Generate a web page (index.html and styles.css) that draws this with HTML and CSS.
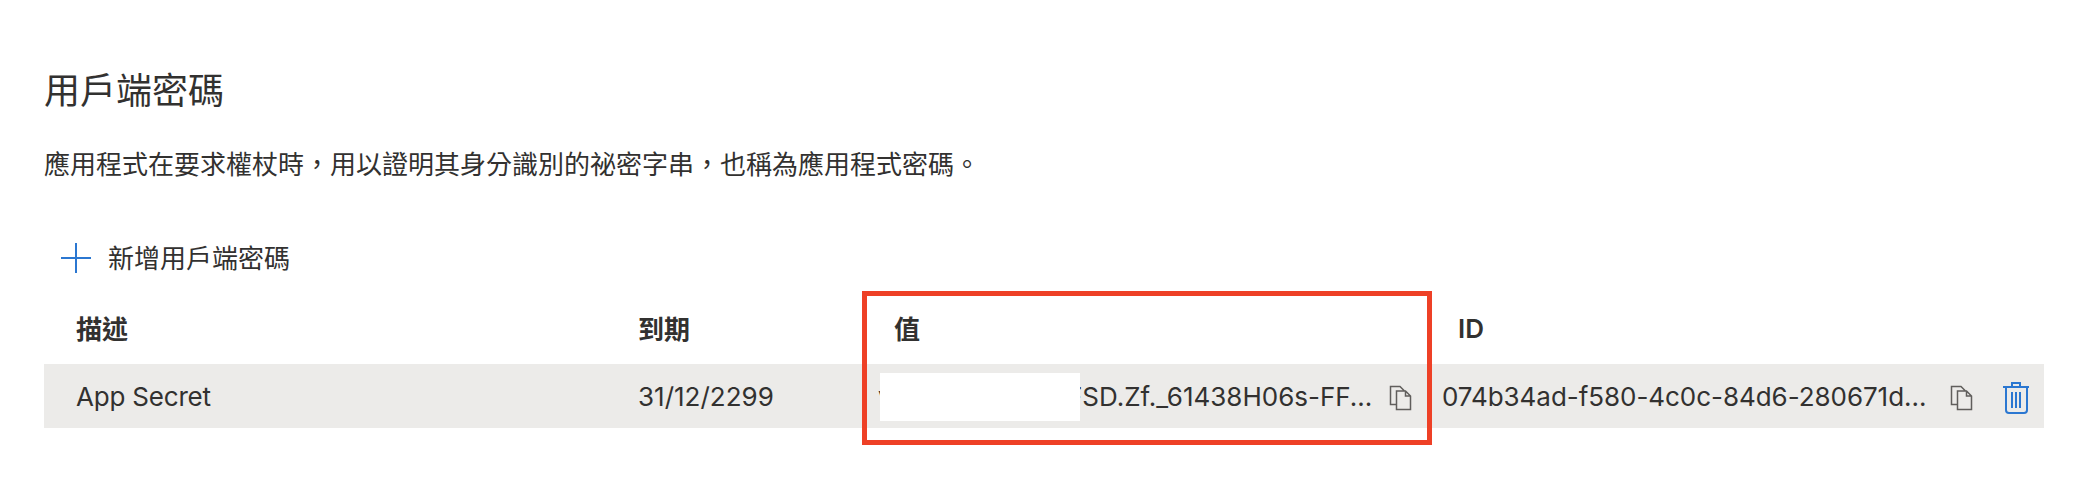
FILE: index.html
```html
<!DOCTYPE html>
<html lang="zh-Hant">
<head>
<meta charset="utf-8">
<title>用戶端密碼</title>
<link rel="stylesheet" href="styles.css">
</head>
<body>
<svg class="defs" width="0" height="0">
  <symbol id="copy" viewBox="0 0 24 26">
    <path d="M7 19.5H1.5V1.5H11L15.5 6M7.5 6H16.5L21.5 11V24.5H7.5ZM16.5 6V11H21.5"/>
  </symbol>
</svg>
<main class="page">
  <h1 class="title">用戶端密碼</h1>
  <p class="description">應用程式在要求權杖時，用以證明其身分識別的祕密字串，也稱為應用程式密碼。</p>
  <button class="add">
    <svg class="plus" viewBox="0 0 30 30"><path d="M15 0V30M0 15H30"/></svg>
    <span class="add-label">新增用戶端密碼</span>
  </button>
  <section class="table">
    <div class="row head">
      <span>描述</span><span>到期</span><span>值</span><span class="id-title">ID</span>
    </div>
    <div class="row data">
      <span class="name">App Secret</span>
      <span class="date">31/12/2299</span>
      <div class="value">
        <span class="prefix">v</span><span class="secret">FSD.Zf._61438H06s-FF...</span>
        <i class="mask"></i>
        <svg class="copy"><use href="#copy"/></svg>
      </div>
      <div class="identifier">
        <span class="guid">074b34ad-f580-4c0c-84d6-280671d...</span>
        <svg class="copy"><use href="#copy"/></svg>
        <svg class="trash" viewBox="0 0 26 32"><path d="M0 5H26M9 4V1H17V4M3 5V28Q3 31 6 31H21Q24 31 24 28V5M9 10V26M13 10V26M17 10V26"/></svg>
      </div>
    </div>
    <div class="highlight"></div>
  </section>
</main>
</body>
</html>
```
FILE: styles.css
```css
* { box-sizing: border-box; }
body {
  margin: 0;
  background: #fff;
  color: #323130;
  font-family: Inter, "Noto Sans CJK TC", sans-serif;
  font-size: 26px;
}
.defs { position: absolute; }
.page { min-height: 502px; padding: 65px 54px 0 44px; }
.title { margin: 0; font-size: 36px; font-weight: 400; line-height: 52px; }
.description { margin: 28px 0 0; line-height: 40px; }
.add {
  display: flex;
  align-items: center;
  gap: 17px;
  height: 40px;
  margin: 53px 0 0;
  padding: 0 0 0 17px;
  border: 0;
  background: none;
  color: inherit;
  font: inherit;
}
.add-label { padding-bottom: 3px; }
.plus { width: 30px; height: 30px; fill: none; stroke: #2b77d1; stroke-width: 2; }
.table { position: relative; margin-top: 22px; }
.row { display: grid; grid-template-columns: 562px 240px 564px 1fr; align-items: center; padding-left: 32px; }
.head { height: 64px; padding-bottom: 10px; font-weight: 600; }
.head > :nth-child(3) { padding-left: 16px; }
.head > .id-title { padding: 3px 0 0 16px; }
.data { height: 64px; background: #ecebe9; }
.name { letter-spacing: -0.2px; }
.value, .identifier { position: relative; display: flex; align-items: center; height: 64px; white-space: nowrap; }
.prefix { width: 189px; }
.secret { width: 322px; }
.guid { width: 508px; letter-spacing: -0.05px; }
.mask { position: absolute; left: 1.5px; top: 9px; width: 200px; height: 48px; background: #fff; }
.copy { width: 24px; height: 26px; margin-top: 3px; flex: none; fill: none; stroke: #605e5c; stroke-width: 1.5; }
.trash { width: 26px; height: 32px; margin: 4px 0 0 29px; flex: none; fill: none; stroke: #2b77d1; stroke-width: 2; }
.highlight { position: absolute; left: 817.5px; top: -9.5px; width: 570px; height: 154px; border: 5px solid #ee4026; }
```
